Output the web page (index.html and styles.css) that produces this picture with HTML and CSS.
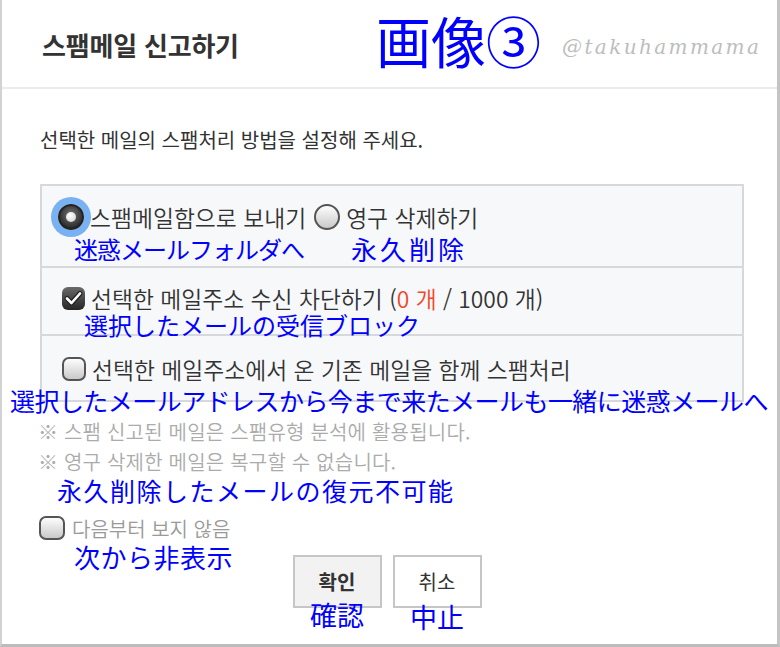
FILE: index.html
```html
<!DOCTYPE html>
<html lang="ko">
<head>
<meta charset="utf-8">
<title>스팸메일 신고하기</title>
<link rel="stylesheet" href="styles.css">
</head>
<body>
<div class="dialog">
	<div class="header">
		<h1 class="title">스팸메일 신고하기</h1>
		<span class="badge" lang="ja">画像③</span>
		<span class="credit">@takuhammama</span>
	</div>

	<div class="content">
		<p class="intro">선택한 메일의 스팸처리 방법을 설정해 주세요.</p>

		<div class="options">
			<div class="row row-first">
				<div class="line">
					<span class="radio checked focused"></span>
					<span class="label">스팸메일함으로 보내기</span>
					<span class="radio"></span>
					<span class="label">영구 삭제하기</span>
				</div>
				<div class="note-ja note-row1" lang="ja">
					<span class="ja-a">迷惑メールフォルダへ</span>
					<span class="ja-b">永久削除</span>
				</div>
			</div>
			<div class="row">
				<div class="line">
					<span class="check checked">
						<svg width="23" height="23" viewBox="0 0 23 23"><path d="M5 11.5 L9.5 16 L18 6.5" fill="none" stroke="#222" stroke-width="5" stroke-linecap="round" stroke-linejoin="round"/><path d="M5 11.5 L9.5 16 L18 6.5" fill="none" stroke="#fff" stroke-width="2.6" stroke-linecap="round" stroke-linejoin="round"/></svg>
					</span>
					<span class="label">선택한 메일주소 수신 차단하기 (<em class="count">0 개</em> / 1000 개)</span>
				</div>
				<div class="note-ja note-row2" lang="ja">選択したメールの受信ブロック</div>
			</div>
			<div class="row row-last">
				<div class="line">
					<span class="check"></span>
					<span class="label">선택한 메일주소에서 온 기존 메일을 함께 스팸처리</span>
				</div>
			</div>
		</div>
		<div class="note-ja note-wide" lang="ja">選択したメールアドレスから今まで来たメールも一緒に迷惑メールへ</div>

		<p class="hint">※ 스팸 신고된 메일은 스팸유형 분석에 활용됩니다.</p>
		<p class="hint">※ 영구 삭제한 메일은 복구할 수 없습니다.</p>
		<div class="note-ja note-hint" lang="ja">永久削除したメールの復元不可能</div>

		<div class="line skip">
			<span class="check"></span>
			<span class="label">다음부터 보지 않음</span>
		</div>
		<div class="note-ja note-skip" lang="ja">次から非表示</div>

		<div class="buttons">
			<div class="btn-col">
				<button class="btn btn-ok">확인</button>
				<span class="note-ja note-btn" lang="ja">確認</span>
			</div>
			<div class="btn-col">
				<button class="btn">취소</button>
				<span class="note-ja note-btn note-cancel" lang="ja">中止</span>
			</div>
		</div>
	</div>
</div>
</body>
</html>
```

FILE: styles.css
```css
* {
	box-sizing: border-box;
}
body {
	margin: 0;
	background: #fff;
	font-family: "Noto Sans CJK KR", "Noto Sans", sans-serif;
	color: #333;
}
.dialog {
	width: 780px;
	height: 647px;
	border-left: 2px solid #d2d2d2;
	border-right: 3px solid #c4c4c4;
	border-bottom: 3px solid #bcbcbc;
	background: #fff;
	overflow: hidden;
}

/* cabecera */
.header {
	height: 89px;
	border-bottom: 2px solid #ebebeb;
	display: flex;
	align-items: center;
	padding-left: 40px;
}
.title {
	flex: 0 0 334px;
	margin: 0;
	font-size: 26px;
	font-weight: bold;
	color: #333;
	letter-spacing: -0.2px;
	padding-top: 2px;
}
.badge {
	flex: 0 0 186px;
	font-family: "Noto Sans CJK JP", sans-serif;
	font-size: 55px;
	line-height: 66px;
	color: #0000ff;
	padding-bottom: 10px;
}
.credit {
	font-family: "DejaVu Serif", serif;
	font-style: italic;
	font-size: 20px;
	color: #bdbdbd;
	letter-spacing: 2.4px;
	padding-top: 6px;
}

/* contenido */
.content {
	padding: 0 36px;
}
.intro {
	margin: 37px 0 0 2px;
	font-size: 20px;
	line-height: 28px;
	color: #333;
}
.options {
	margin-top: 30px;
	margin-left: 2px;
	width: 704px;
	border: 2px solid #d6d8db;
	background: #f7f8fa;
}
.row {
	border-top: 2px solid #d6d8db;
	padding: 16px 0 0 20px;
	height: 68px;
}
.row-first {
	border-top: none;
	padding: 17px 0 0 16px;
	height: 80px;
}
.row-last {
	height: 66px;
	padding-top: 19px;
}
.line {
	display: flex;
	align-items: center;
	height: 28px;
	font-size: 22.8px;
	font-weight: 350;
	color: #333;
}
.label {
	margin-left: 6px;
	margin-right: 8px;
	white-space: nowrap;
}
.count {
	font-style: normal;
	color: #f2462a;
}

/* radios y casillas dibujados */
.radio {
	width: 26px;
	height: 26px;
	border-radius: 50%;
	border: 2px solid #555;
	background: linear-gradient(#fdfdfd, #c9c9c9);
	flex: none;
}
.radio.checked {
	position: relative;
	background: radial-gradient(circle at 50% 40%, #777, #2a2a2a 75%);
	border-color: #222;
}
.radio.checked::after {
	content: "";
	position: absolute;
	left: 6px;
	top: 6px;
	width: 10px;
	height: 10px;
	border-radius: 50%;
	background: radial-gradient(circle at 40% 35%, #fff, #cfcfcf);
}
.radio.focused {
	box-shadow: 0 0 0 7px #78b2f3;
}
.check {
	width: 24px;
	height: 24px;
	border-radius: 7px;
	border: 2px solid #555;
	background: linear-gradient(#fdfdfd, #c9c9c9);
	flex: none;
}
.check.checked {
	border: none;
	background: linear-gradient(#6a6a6a, #262626);
	border-radius: 6px;
	width: 23px;
	height: 23px;
}
.check svg {
	display: block;
}

/* notas en japones */
.note-ja {
	font-family: "Noto Sans CJK JP", sans-serif;
	color: #0000ff;
	font-size: 26px;
	line-height: 28px;
	white-space: nowrap;
}
.note-row1 {
	display: flex;
	margin-top: 4px;
	font-size: 24px;
}
.ja-a {
	margin-left: 16px;
	letter-spacing: -1px;
}
.ja-b {
	margin-left: 47px;
	font-size: 26px;
	letter-spacing: 3px;
}
.note-row2 {
	margin-top: -1px;
	margin-left: 22px;
	font-size: 24px;
}
.note-wide {
	margin: -16px 0 0 -28px;
	font-size: 25px;
	letter-spacing: -0.55px;
	position: relative;
}
.hint {
	margin: 5px 0 0 0;
	font-size: 20px;
	line-height: 26px;
	font-weight: 350;
	letter-spacing: 0.2px;
	color: #ababab;
}
.hint + .hint {
	margin-top: 4px;
}
.note-hint {
	margin: 1px 0 0 19px;
	font-size: 25px;
	letter-spacing: 1.5px;
}
.skip {
	margin: 10px 0 0 1px;
	font-size: 20px;
	color: #9a9a9a;
}
.skip .check {
	width: 26px;
}
.skip .label {
	margin-left: 7px;
}
.note-skip {
	margin: 1px 0 0 36px;
	letter-spacing: 0.5px;
}

/* botones */
.buttons {
	display: flex;
	justify-content: center;
	gap: 11px;
	margin-top: -16px;
	padding-right: 5px;
}
.btn-col {
	display: flex;
	flex-direction: column;
	align-items: center;
}
.btn {
	width: 89px;
	height: 53px;
	border: 2px solid #c6c6c6;
	background: #fff;
	font-family: "Noto Sans CJK KR", sans-serif;
	font-size: 20px;
	color: #333;
	padding: 0;
}
.btn-ok {
	background: #f2f2f2;
	font-weight: bold;
}
.note-btn {
	margin-top: -7px;
	font-size: 27px;
	position: relative;
}
.note-cancel {
	margin-top: -5px;
}
```
